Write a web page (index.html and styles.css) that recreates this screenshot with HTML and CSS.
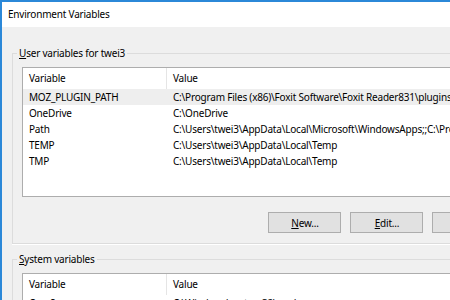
FILE: index.html
```html
<!DOCTYPE html>
<html>
<head>
<meta charset="utf-8">
<link rel="stylesheet" href="styles.css">
</head>
<body>
<div class="window">
  <div class="titlebar">Environment Variables</div>
  <div class="client">
    <fieldset class="group">
      <legend class="group-label"><u>U</u>ser variables for twei3</legend>
      <div class="listbox">
        <div class="row header">
          <div class="cell name sep">Variable</div>
          <div class="cell value">Value</div>
        </div>
        <div class="row selected">
          <div class="cell name">MOZ_PLUGIN_PATH</div>
          <div class="cell value">C:\Program Files (x86)\Foxit Software\Foxit Reader831\plugins\</div>
        </div>
        <div class="row">
          <div class="cell name">OneDrive</div>
          <div class="cell value">C:\OneDrive</div>
        </div>
        <div class="row">
          <div class="cell name">Path</div>
          <div class="cell value">C:\Users\twei3\AppData\Local\Microsoft\WindowsApps;;C:\Program Files\</div>
        </div>
        <div class="row">
          <div class="cell name">TEMP</div>
          <div class="cell value">C:\Users\twei3\AppData\Local\Temp</div>
        </div>
        <div class="row">
          <div class="cell name">TMP</div>
          <div class="cell value">C:\Users\twei3\AppData\Local\Temp</div>
        </div>
      </div>
      <div class="buttons">
        <button class="btn"><u>N</u>ew...</button>
        <button class="btn"><u>E</u>dit...</button>
        <button class="btn"><u>D</u>elete</button>
      </div>
    </fieldset>
    <fieldset class="group second">
      <legend class="group-label"><u>S</u>ystem variables</legend>
      <div class="listbox">
        <div class="row header">
          <div class="cell name sep">Variable</div>
          <div class="cell value">Value</div>
        </div>
        <div class="row">
          <div class="cell name">ComSpec</div>
          <div class="cell value">C:\Windows\system32\cmd.exe</div>
        </div>
        <div class="row">
          <div class="cell name">NUMBER_OF_PROCESSORS</div>
          <div class="cell value">4</div>
        </div>
      </div>
    </fieldset>
  </div>
</div>
</body>
</html>
```

FILE: styles.css
```css
html, body {
  margin: 0;
  padding: 0;
  width: 450px;
  height: 300px;
  overflow: hidden;
  background: #f0f0f0;
}

body {
  font-family: "Noto Sans", "Open Sans", sans-serif;
  font-size: 10px;
  letter-spacing: -0.2px;
  color: #000;
}

.window {
  width: 484px;
  height: 400px;
  border-top: 2px solid #2b88d8;
  border-left: 2px solid #2b88d8;
  background: #f0f0f0;
}

.titlebar {
  height: 25px;
  line-height: 24px;
  padding-left: 6px;
  background: #fff;
  white-space: nowrap;
}

.client {
  padding: 0 10px;
  background: #f0f0f0;
}

.group {
  margin: 0;
  margin-top: 19px;
  padding: 7px 9px 10px 9px;
  border: 1px solid #dcdcdc;
  box-shadow: 0 1px 0 #fff;
}

.group.second {
  margin-top: 8px;
}

.group-label {
  margin-left: -5px;
  padding: 0 2px;
  line-height: 14px;
  white-space: nowrap;
}

.listbox {
  height: 128px;
  border: 1px solid #adadad;
  background: #fff;
  overflow: hidden;
}

.row {
  display: flex;
  height: 16px;
  line-height: 16px;
  white-space: nowrap;
}

.row.header {
  height: 21px;
  line-height: 21px;
}

.row.selected {
  background: #eeeeee;
}

.cell {
  padding-left: 6px;
  box-sizing: border-box;
}

.cell.name {
  width: 144px;
  flex: none;
}

.cell.sep {
  border-right: 1px solid #e5e5e5;
}

.cell.value {
  flex: 1;
}

.buttons {
  display: flex;
  justify-content: flex-end;
  gap: 9px;
  margin-top: 15px;
}

.btn {
  width: 73px;
  height: 21px;
  padding: 0;
  border: 1px solid #adadad;
  background: #e1e1e1;
  font-family: inherit;
  font-size: 10px;
  letter-spacing: -0.2px;
  color: #000;
}
```
